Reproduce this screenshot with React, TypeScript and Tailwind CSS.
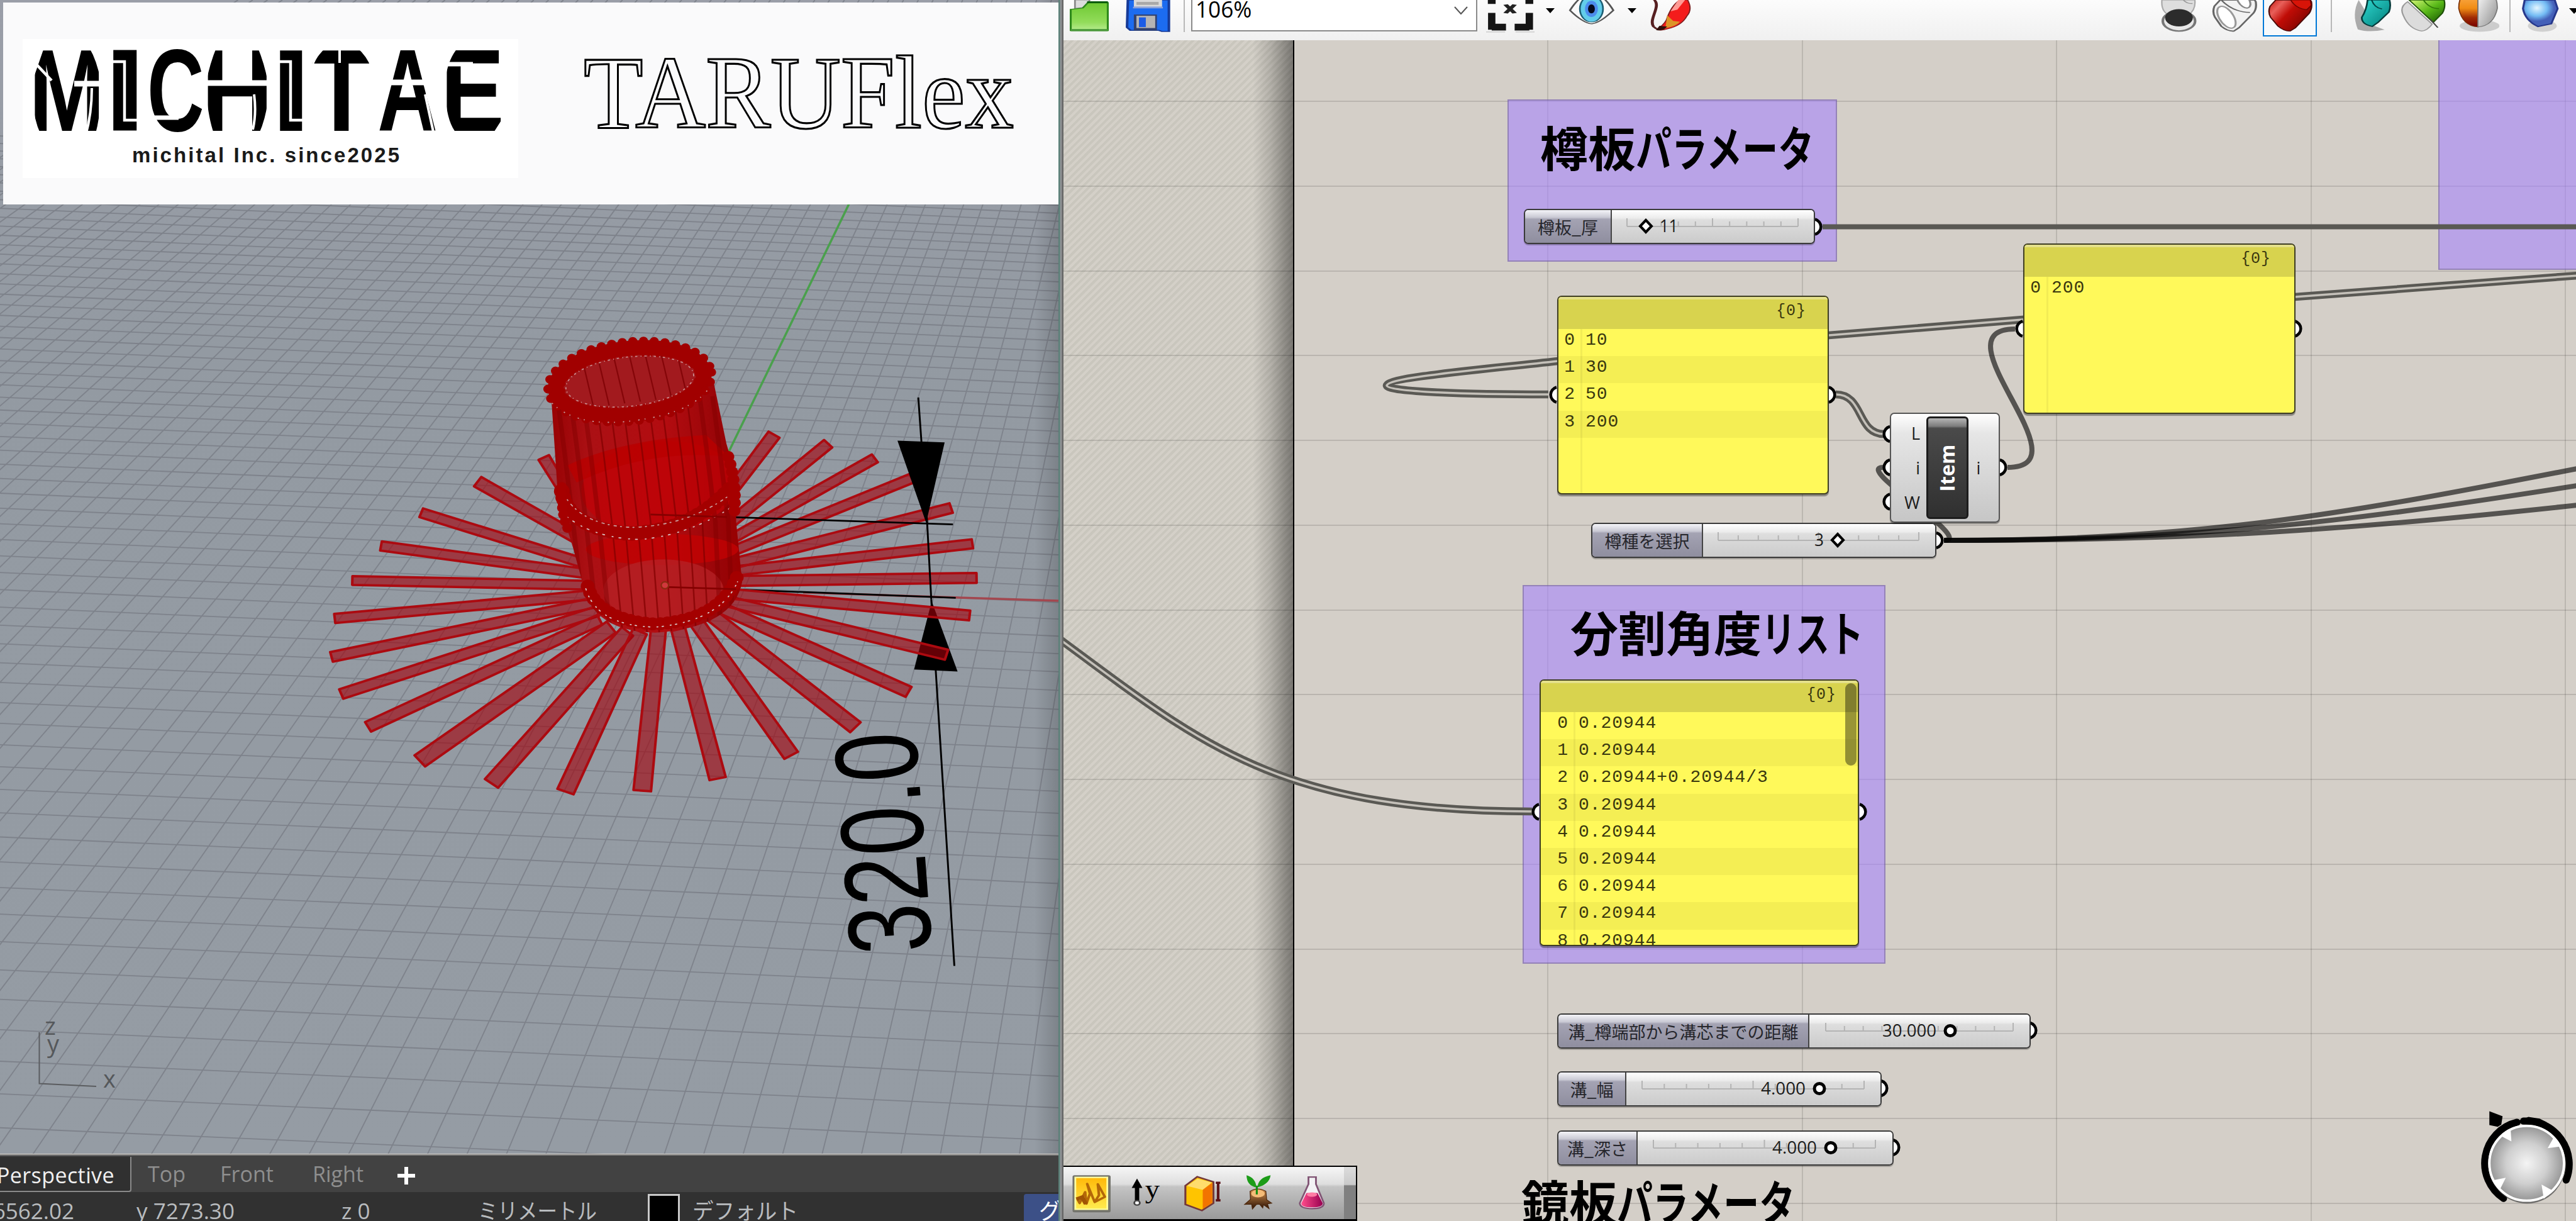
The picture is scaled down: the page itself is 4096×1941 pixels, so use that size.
import React from "react";

const JP = "font-['Noto_Sans_CJK_JP',sans-serif]";
const UI = "font-['Open_Sans','Noto_Sans_CJK_JP',sans-serif]";

/* ---------- Rhino viewport ---------- */

// Outer end, inner end and width of every flattened stave.
const STAVES: number[][] = [
  [549, 332, 605, 430, 26], [406, 388, 640, 530, 30], [284, 460, 650, 582, 25], [197, 537, 655, 603, 25],
  [135, 617, 655, 628, 24], [97, 705, 655, 650, 25], [90, 794, 660, 668, 27], [111, 880, 665, 688, 27],
  [169, 956, 670, 708, 29], [281, 1035, 695, 725, 38], [436, 1087, 730, 735, 37], [596, 1106, 757, 735, 38],
  [762, 1104, 797, 730, 38], [925, 1076, 840, 730, 36], [1084, 1022, 880, 715, 35], [1223, 957, 915, 700, 35],
  [1338, 875, 935, 682, 30], [1420, 789, 945, 665, 28], [1470, 698, 955, 648, 27], [1485, 611, 955, 618, 27],
  [1476, 532, 955, 596, 25], [1430, 449, 950, 580, 27], [1345, 380, 950, 552, 25], [1265, 334, 940, 530, 25],
  [1164, 300, 945, 490, 27], [1047, 279, 940, 430, 29],
];

const stavePoints = ([x1, y1, x2, y2, w]: number[]) => {
  const l = Math.hypot(x2 - x1, y2 - y1);
  const nx = (-(y2 - y1) / l) * (w / 2);
  const ny = ((x2 - x1) / l) * (w / 2);
  const k = 0.85;
  return `${x1 + nx},${y1 + ny * k} ${x1 - nx},${y1 - ny * k} ${x2 - nx * k},${y2 - ny * k} ${x2 + nx * k},${y2 + ny * k}`;
};

const HORIZON = -1100;
const ROWS = Array.from({ length: 70 }, (_, i) => HORIZON + 157500 / (77.586 - (i - 38)));
const COLS = Array.from({ length: 68 }, (_, i) => 1056 + 43.4 * (i - 48));

const BODY = "M565,190 L572,300 L580,430 L612,540 L640,650 Q670,735 790,738 Q960,725 978,620 L965,480 L966,380 L944,300 L915,150 Z";

function Scene() {
  return (
    <svg className="absolute inset-0 block" width="1683" height="1834" viewBox="0 0 1683 1834">
      <defs>
        <linearGradient id="sky" x1="0" y1="0" x2="0" y2="1">
          <stop offset="0" stopColor="#9a9ea8" />
          <stop offset="0.3" stopColor="#939aa2" />
          <stop offset="1" stopColor="#959ca4" />
        </linearGradient>
        <linearGradient id="wood" x1="0" y1="0" x2="1" y2="0">
          <stop offset="0" stopColor="#980204" />
          <stop offset="0.2" stopColor="#ab1014" />
          <stop offset="0.6" stopColor="#b30c10" />
          <stop offset="0.88" stopColor="#980508" />
          <stop offset="1" stopColor="#980000" />
        </linearGradient>
        <linearGradient id="edge" x1="0" y1="0" x2="1" y2="0">
          <stop offset="0" stopColor="#000" stopOpacity="0" />
          <stop offset="1" stopColor="#000" stopOpacity="0.16" />
        </linearGradient>
        <clipPath id="bodyClip">
          <path d={BODY} />
        </clipPath>
      </defs>
      <rect width="1683" height="1834" fill="url(#sky)" />
      <g stroke="#7c8089" strokeWidth="1.8" opacity="0.9">
        {ROWS.map((y, i) => (
          <line key={i} x1="0" y1={y - 1056 * 0.044} x2="1683" y2={y + 626 * 0.044} />
        ))}
        {COLS.map((x, i) => {
          const dx = (2041 - x) / 2030;
          return <line key={i} x1={x + dx * 930} y1="0" x2={x - dx * 920} y2="1850" />;
        })}
      </g>
      <line x1="1056" y1="930" x2="1352" y2="320" stroke="#4aa04c" strokeWidth="3.5" />
      <rect x="1645" width="38" height="1834" fill="url(#edge)" />

      <g transform="translate(461 499.5) scale(.7352 .6861)">
        <path d="M1387,660 L1437,1510" stroke="#000" strokeWidth="4" />
        <path d="M1388,665 L1350,823 L1444,828 Z" />
        <path d="M1110,645 L1664,664" stroke="#a3474f" strokeWidth="5" />
        <path d="M965,638 L1440,657" stroke="#000" strokeWidth="4" />
        {STAVES.map((s, i) => (
          <polygon key={i} points={stavePoints(s)} fill="#a1000a" fillOpacity="0.62" stroke="#ac0a10" strokeWidth="5.5" strokeLinejoin="round" />
        ))}
        <path d="M945,470 L1434,487" stroke="#000" strokeWidth="4" />
        <path d="M1359,193 L1378,480 L1387,660" stroke="#000" strokeWidth="4" fill="none" />
        <path d="M1314,293 L1416,297 L1376,483 Z" />

        <path d={BODY} fill="url(#wood)" />
        <g clipPath="url(#bodyClip)">
          <ellipse cx="800" cy="400" rx="170" ry="105" fill="#c20205" opacity="0.7" transform="rotate(-6 800 400)" />
          <path d="M600,350 Q720,290 900,280 L950,330 Q780,310 620,390 Z" fill="#b90000" opacity="0.8" />
          <ellipse cx="805" cy="545" rx="165" ry="36" fill="#c00203" opacity="0.85" />
          <ellipse cx="808" cy="640" rx="130" ry="72" fill="#b52327" opacity="0.75" />
          {Array.from({ length: 13 }, (_, i) => {
            const x = 578 + i * 28;
            const rim = i < 3 || i > 10;
            return (
              <path key={i} d={`M${x},190 L${x + 16},320 L${x + 34},480 L${x + 62 - i * 1.5},740`} fill="none" stroke="#800000" strokeWidth={rim ? 10 : 3.5} opacity={rim ? 0.45 : 0.7} />
            );
          })}
        </g>

        <g fill="none" strokeLinecap="round">
          <path d="M588,410 Q600,495 730,508 Q870,505 955,400" stroke="#a40000" strokeWidth="34" strokeDasharray="0.1 15" />
          <path d="M588,410 Q600,495 730,508 Q870,505 955,400" stroke="#a40000" strokeWidth="20" opacity="0.8" />
          <path d="M600,430 Q640,490 740,494 Q860,490 950,420" stroke="#c9a0a0" strokeWidth="2.5" strokeDasharray="2 11 5 9" />
          <path d="M600,470 Q660,520 760,522 Q870,510 965,440" stroke="#d8c0c0" strokeWidth="2.5" strokeDasharray="2 13 4 17" />
          <path d="M644,630 Q664,708 790,718 Q935,708 968,605" stroke="#a40000" strokeWidth="30" strokeDasharray="0.1 16" />
          <path d="M644,630 Q664,708 790,718 Q935,708 968,605" stroke="#a40000" strokeWidth="18" />
          <path d="M640,636 Q664,722 790,725 Q930,712 968,620" stroke="#d8caca" strokeWidth="2.5" strokeDasharray="3 15 2 9" />
          <path d="M948,330 Q968,400 960,470" stroke="#a60000" strokeWidth="26" strokeDasharray="0.1 18" />
          <path d="M588,400 Q584,460 602,500" stroke="#a60000" strokeWidth="22" strokeDasharray="0.1 16" />
        </g>

        <g transform="rotate(-7 735 156)">
          <ellipse cx="735" cy="156" rx="152" ry="72" fill="#a21a1e" />
          {[0, 1, 2, 3, 4, 5, 6].map((i) => (
            <path key={i} d={`M${640 + i * 34},100 L${650 + i * 34},205`} stroke="#840508" strokeWidth="3" />
          ))}
          <g fill="none" stroke="#a10000" strokeLinecap="round">
            <ellipse cx="735" cy="156" rx="161" ry="77" strokeWidth="34" />
            <ellipse cx="735" cy="156" rx="178" ry="92" strokeWidth="20" strokeDasharray="0.1 23" />
            <ellipse cx="735" cy="156" rx="147" ry="62" strokeWidth="12" strokeDasharray="0.1 16" />
          </g>
          <ellipse cx="735" cy="156" rx="139" ry="57" fill="none" stroke="#c98b8d" strokeWidth="2.5" strokeDasharray="5 7 2 6" />
          <path d="M562,185 Q610,250 735,247 Q860,245 905,190" fill="none" stroke="#c9a0a2" strokeWidth="2.5" strokeDasharray="3 11 2 17" />
        </g>

        <path d="M780,464 L945,470 M811,632 L965,637" stroke="#850000" strokeWidth="4" />
        <circle cx="811" cy="628" r="8" fill="#d0383c" stroke="#8b2a10" strokeWidth="3" />
      </g>

      <text
        transform="translate(1482 1511) rotate(-94.3)"
        fontSize="188"
        textLength="352"
        lengthAdjust="spacingAndGlyphs"
        className="font-['Liberation_Sans',sans-serif]"
      >
        320.0
      </text>

      <path d="M62.500,1641 V1722.500 L153,1727" fill="none" stroke="#5b5d60" strokeWidth="2" />
      <g fontSize="38" fill="#55585b" className="font-['Open_Sans',sans-serif]">
        <text x="71" y="1645">z</text>
        <text x="75" y="1673">y</text>
        <text x="164" y="1729">x</text>
      </g>
    </svg>
  );
}

// letter, left edge, ink width, side bearing and ink width in em/100
const MARK: [string, number, number, number, number][] = [
  ["M", 56, 101, 7, 69.5], ["I", 181, 36, 7, 14], ["C", 240, 79, 4.7, 63], ["H", 331, 92, 7, 58],
  ["I", 446, 34, 7, 14], ["T", 498, 90, 2, 57], ["A", 601, 94, 0.5, 71], ["E", 711, 84, 7, 55],
];

function Banner() {
  return (
    <div className="absolute left-[5px] top-[4px] flex h-[321px] w-[1680px] bg-[#fafafb]">
      <div className="ml-[31px] mt-[58px] h-[221px] w-[788px] bg-white">
        <svg className="block overflow-visible" width="788" height="221" viewBox="36 62 788 221">
          <g fontSize="100" fontWeight="700" className="font-['Liberation_Sans',sans-serif]">
            {MARK.map(([c, x, w, bearing, ink], i) => (
              <text key={i} transform={`translate(${x - (bearing * w) / ink} 207.500) scale(${w / ink} 1.860)`}>
                {c}
              </text>
            ))}
          </g>
          <g fill="none" stroke="#fff">
            <path d="M118,133 H160 M328,132 H428 M598,131 H700" strokeWidth="9" />
            <path d="M50,94 L82,128 M178,98 H198 V191 H220 M443,98 H462 V191 H482" strokeWidth="4.500" />
            <path d="M234,187 H284 M706,102 H752" strokeWidth="7" />
            <path d="M540,76 V100 M136,216 Q146,180 146,140 M404,150 Q408,180 402,206 M676,150 L690,214" strokeWidth="4" />
          </g>
          <g fill="#fff">
            <path d="M52,76 H70 L52,128 Z M161,76 H142 Q154,96 160,128 Z M52,212 H64 Q54,190 52,160 Z M161,212 H152 Q158,190 160,160 Z" />
            <path d="M326,76 H344 Q334,100 328,130 Z M428,76 H410 Q420,100 426,130 Z M326,212 H340 Q332,190 328,150 Z M428,212 H412 Q422,190 426,160 Z" />
            <path d="M494,76 H518 Q502,90 497,108 Z M592,76 H568 Q584,90 590,108 Z" />
            <path d="M707,76 H728 Q714,92 709,120 Z M707,212 H726 Q712,196 709,160 Z M798,212 H784 L798,190 Z" />
          </g>
          <text x="210" y="258" fontSize="33" fontWeight="700" fill="#1a1a1a" textLength="425" className="font-['Liberation_Sans',sans-serif]">
            michital Inc. since2025
          </text>
        </svg>
      </div>
      <svg className="ml-[90px] mt-[66px] block overflow-visible" width="720" height="170" viewBox="914 70 720 170">
        <text x="928" y="203" fontSize="166" fill="#fbfbfc" stroke="#000" strokeWidth="3.200" textLength="684" lengthAdjust="spacingAndGlyphs" className="font-['Liberation_Serif',serif]">
          TARUFlex
        </text>
      </svg>
    </div>
  );
}

function RhinoPane() {
  return (
    <div className="flex w-[1683px] shrink-0 flex-col overflow-hidden">
      <div className="relative h-[1835px] shrink-0 overflow-hidden">
        <Scene />
        <Banner />
      </div>
      <div className={`flex h-[60px] shrink-0 items-stretch whitespace-nowrap border-t-2 border-[#808080] bg-[#424242] text-[34px] leading-[58px] text-[#8e8e8e] ${UI}`}>
        <div className="mt-0.5 flex w-[209px] shrink-0 justify-end rounded-br border-b-2 border-r-2 border-[#8a8a8a] bg-[#303030] pr-[25px] tracking-[0.4px] text-[#f0f0f0]">
          Perspective
        </div>
        <div className="ml-[26px] w-[115px]">Top</div>
        <div className="w-[147px]">Front</div>
        <div className="w-[134px]">Right</div>
        <svg className="mt-[17px]" width="30" height="30" viewBox="0 0 30 30">
          <path d="M15,1 V29 M1,15 H29" stroke="#fff" strokeWidth="6" />
        </svg>
      </div>
      <div className={`flex h-[46px] shrink-0 overflow-hidden whitespace-nowrap bg-[#313131] text-[35px] leading-[60px] text-[#b9bcbf] ${UI}`}>
        <div className="flex w-[118px] shrink-0 justify-end">6562.02</div>
        <div className="ml-[99px] w-[326px] shrink-0">y 7273.30</div>
        <div className="w-[217px] shrink-0">z 0</div>
        <div className="w-[270px] shrink-0 origin-left scale-x-[.9]">ミリメートル</div>
        <div className="mt-[3px] h-[60px] w-[51px] shrink-0 border-[3px] border-[#c9c9c9] bg-black" />
        <div className="ml-[20px] w-[527px] shrink-0">
          <span className="inline-block origin-left scale-x-[.96]">デフォルト</span>
        </div>
        <div className="mt-[3px] w-[60px] shrink-0 overflow-hidden rounded-tl bg-[#3c5087] pl-[24px] leading-[54px] text-white">グ</div>
      </div>
    </div>
  );
}

/* ---------- Grasshopper toolbar ---------- */

function Icon({ x, w, className, children }: { x: number; w: number; className: string; children: React.ReactNode }) {
  return (
    <svg className={`block h-[62px] shrink-0 ${className}`} viewBox={`${x} 0 ${w} 242`} preserveAspectRatio="none">
      {children}
    </svg>
  );
}

// Icons on the right half share a coordinate space that is slightly wider per pixel.
function ShapeIcon({ x, w, className, children }: { x: number; w: number; className: string; children: React.ReactNode }) {
  return (
    <svg className={`block h-[62px] shrink-0 ${className}`} viewBox={`${x} 0 ${w} 226`} preserveAspectRatio="none">
      {children}
    </svg>
  );
}

function Toolbar() {
  return (
    <div className="flex h-[64px] shrink-0 items-start bg-linear-to-b from-[#fcfcfc] to-[#f0f0f0]">
      <svg width="0" height="0" className="absolute">
        <defs>
          <linearGradient id="folder" x1="0" y1="0" x2="0" y2="1"><stop offset="0" stopColor="#6ec832" /><stop offset=".7" stopColor="#92dc5a" /><stop offset="1" stopColor="#b8ec90" /></linearGradient>
          <linearGradient id="red" x1="0" y1="0" x2="1" y2=".7"><stop offset="0" stopColor="#c81810" /><stop offset=".25" stopColor="#e8605a" /><stop offset=".5" stopColor="#c00c06" /><stop offset="1" stopColor="#760400" /></linearGradient>
          <linearGradient id="teal" x1="0" y1="0" x2="1" y2="1"><stop offset="0" stopColor="#30d8d0" /><stop offset="1" stopColor="#007c78" /></linearGradient>
          <linearGradient id="green" x1="0" y1="0" x2="1" y2="1"><stop offset="0" stopColor="#d8f878" /><stop offset=".5" stopColor="#58b818" /><stop offset="1" stopColor="#145000" /></linearGradient>
          <linearGradient id="orange" x1="0" y1="0" x2="0" y2="1"><stop offset="0" stopColor="#ffb860" /><stop offset=".5" stopColor="#f08c14" /><stop offset=".75" stopColor="#a02c04" /><stop offset="1" stopColor="#700" /></linearGradient>
          <linearGradient id="silver" x1="0" y1="0" x2="1" y2="1"><stop offset="0" stopColor="#fff" /><stop offset="1" stopColor="#8c8c8c" /></linearGradient>
          <radialGradient id="blue" cx=".4" cy=".3"><stop offset="0" stopColor="#e4f6ff" /><stop offset=".6" stopColor="#74bcf4" /><stop offset="1" stopColor="#4460b8" /></radialGradient>
        </defs>
      </svg>
      <Icon x={26} w={90} className="ml-[10px] w-[62px]">
        <path d="M38,0 H72 L64,45 L38,52 Z" fill="#dcdcdc" stroke="#888" strokeWidth="4" />
        <path d="M28,58 L56,50 L68,16 H114 V190 H28 Z" fill="url(#folder)" stroke="#2f8a1c" strokeWidth="5" />
        <rect x="66" y="8" width="48" height="12" fill="#0a5c0c" />
        <rect x="28" y="180" width="86" height="14" fill="#4c9a3c" />
      </Icon>
      <Icon x={155} w={106} className="ml-[27px] w-[72px]">
        <path d="M160,0 H256 V195 H240 L232,188 H166 L158,170 Z" fill="#1c6cf0" stroke="#173a96" strokeWidth="6" />
        <rect x="174" width="66" height="42" fill="#d9d9d9" />
        <rect x="180" y="12" width="52" height="18" fill="#a8a8a8" />
        <rect x="172" y="42" width="70" height="10" fill="#8fa3d8" />
        <rect x="174" y="90" width="54" height="100" fill="#32426e" />
        <rect x="180" y="98" width="44" height="76" fill="#b4b4b4" />
        <rect x="186" y="108" width="16" height="60" fill="#1b5ce6" />
      </Icon>
      <div className="ml-[20px] h-[51px] w-[2px] shrink-0 bg-[#b8b8b8]" />
      <div className={`ml-[10px] flex h-[50px] w-[455px] shrink-0 items-start justify-between border-x-2 border-b-2 border-[#8a8a8a] bg-white pl-[5px] pr-[12px] text-[37px] leading-[28px] text-black ${UI}`}>
        <span className="origin-left scale-x-[.95]">106%</span>
        <svg className="mt-[9px]" width="24" height="15" viewBox="0 0 24 15"><path d="M2,2 L12,13 L22,2" fill="none" stroke="#555" strokeWidth="2" /></svg>
      </div>
      <Icon x={990} w={112} className="ml-[14px] w-[77px]">
        <path d="M1003,0 V24 M1090,0 V24" stroke="#151515" strokeWidth="18" />
        <path d="M1003,80 V176 H1034 M1090,80 V176 H1058" fill="none" stroke="#151515" strokeWidth="17" />
        <path d="M1003,168 H1036 M1090,168 H1056" stroke="#151515" strokeWidth="42" />
        <path d="M1035,28 L1056,82 M1056,28 L1035,82" stroke="#222" strokeWidth="11" />
        <path d="M990,198 H1034 M1058,198 H1102" stroke="#ccc" strokeWidth="6" />
      </Icon>
      <div className="ml-[18px] mt-[13px] border-x-[7px] border-t-[8px] border-x-transparent border-t-black" />
      <Icon x={1180} w={110} className="ml-[21px] w-[75px]">
        <path d="M1185,64 Q1210,-40 1236,-40 Q1262,-40 1286,64 Q1255,142 1236,148 Q1215,142 1185,64 Z" fill="#fafafa" stroke="#555" strokeWidth="5" />
        <ellipse cx="1235" cy="55" rx="27" ry="82" fill="#62cdea" stroke="#1d5f74" strokeWidth="4" />
        <ellipse cx="1235" cy="55" rx="15" ry="50" fill="#4c8cec" />
        <ellipse cx="1235" cy="55" rx="8" ry="28" fill="#050a1c" />
      </Icon>
      <div className="ml-[20px] mt-[13px] border-x-[7px] border-t-[8px] border-x-transparent border-t-black" />
      <Icon x={1366} w={106} className="ml-[19px] w-[72px]">
        <path d="M1380,0 C1396,40 1366,120 1378,165 Q1390,195 1404,180" fill="none" stroke="#572022" strokeWidth="7" />
        <path d="M1408,125 Q1420,30 1440,0 H1458 Q1470,60 1456,100 Q1444,160 1410,180 Q1390,195 1386,180 Q1400,160 1408,125 Z" fill="#f41c1c" stroke="#7c2020" strokeWidth="3" />
        <path d="M1436,0 L1418,70 L1434,60 L1452,0 Z" fill="#ff9a94" />
        <path d="M1410,95 L1424,130 L1440,135 Q1430,165 1406,175 Z" fill="#dc9428" />
        <path d="M1392,160 L1410,165 Q1400,195 1384,186 Z" fill="#30100c" />
      </Icon>
      <ShapeIcon x={112} w={135} className="ml-[740px] w-[62px]">
        <path d="M122,0 Q118,70 150,90 L212,88 Q240,60 236,0 Z" fill="#dedede" stroke="#aaa" strokeWidth="5" />
        <path d="M196,0 Q210,24 228,20" fill="none" stroke="#999" strokeWidth="5" />
        <ellipse cx="181" cy="122" rx="56" ry="58" fill="#e8e8e8" stroke="#777" strokeWidth="9" />
        <ellipse cx="181" cy="103" rx="48" ry="50" fill="#2c2c2c" />
      </ShapeIcon>
      <ShapeIcon x={295} w={162} className="ml-[21px] w-[74px]">
        <path d="M326,0 L306,36 Q298,70 308,100 L330,152 Q352,182 374,180 L392,160 L442,76 Q454,50 450,10 L446,0 Z" fill="#f2f2f2" stroke="#666" strokeWidth="7" />
        <ellipse cx="348" cy="100" rx="26" ry="66" fill="#fff" stroke="#999" strokeWidth="7" transform="rotate(-18 348 100)" />
        <path d="M330,0 Q370,70 430,72" fill="none" stroke="#666" strokeWidth="6" />
        <ellipse cx="408" cy="4" rx="20" ry="44" fill="#fff" stroke="#888" strokeWidth="7" transform="rotate(-18 408 4)" />
      </ShapeIcon>
      <div className="ml-[8px] flex h-[58px] w-[86px] shrink-0 justify-center overflow-hidden border-x-2 border-b-2 border-[#0078d7] bg-[#f7f9fb]">
        <ShapeIcon x={490} w={162} className="w-[74px]">
          <path d="M522,0 L502,36 Q494,70 504,100 L530,152 Q552,182 572,180 L590,162 L638,78 Q650,50 646,10 L642,0 Z" fill="url(#red)" stroke="#4c0a08" strokeWidth="5" />
          <path d="M574,0 Q592,50 630,56 L646,30 L642,0 Z" fill="#d81408" stroke="#6a0400" strokeWidth="4" />
        </ShapeIcon>
      </div>
      <div className="ml-[22px] h-[51px] w-[2px] shrink-0 bg-[#b8b8b8]" />
      <ShapeIcon x={790} w={142} className="ml-[31px] w-[65px]">
        <path d="M815,0 Q790,80 812,170 Q850,190 905,172 L870,150 Z" fill="#000" opacity=".3" />
        <path d="M846,0 Q842,60 826,100 Q824,140 862,153 L882,130 L920,70 Q928,36 922,0 Z" fill="url(#teal)" stroke="#063c3c" strokeWidth="6" />
        <path d="M860,0 Q870,46 896,52" fill="none" stroke="#044" strokeWidth="5" />
      </ShapeIcon>
      <ShapeIcon x={958} w={162} className="ml-[12px] w-[74px]">
        <path d="M985,10 Q955,40 970,90 Q990,170 1034,180 Q1054,176 1070,140 Z" fill="#dcdcdc" stroke="#999" strokeWidth="5" />
        <path d="M990,0 L1074,130 L1106,76 Q1118,40 1112,0 Z" fill="url(#green)" stroke="#1e5008" strokeWidth="5" />
        <path d="M1040,0 Q1060,50 1094,50" fill="none" stroke="#2f7808" strokeWidth="5" />
        <path d="M1062,110 L1090,160" stroke="#444" strokeWidth="5" />
      </ShapeIcon>
      <ShapeIcon x={1154} w={150} className="ml-[16px] w-[68px]">
        <ellipse cx="1235" cy="150" rx="70" ry="34" fill="#000" opacity=".16" />
        <path d="M1229,-60 Q1160,-60 1162,50 Q1175,150 1229,156 Z" fill="url(#orange)" stroke="#7a3008" strokeWidth="4" />
        <path d="M1229,-60 Q1300,-60 1297,50 Q1284,150 1229,156 Z" fill="url(#silver)" stroke="#777" strokeWidth="4" />
      </ShapeIcon>
      <div className="ml-[16px] h-[51px] w-[2px] shrink-0 bg-[#b8b8b8]" />
      <ShapeIcon x={1380} w={135} className="ml-[16px] w-[62px]">
        <ellipse cx="1455" cy="150" rx="50" ry="34" fill="#000" opacity=".14" />
        <path d="M1394,0 L1388,50 Q1396,120 1440,154 L1486,138 L1508,50 L1498,0 Z" fill="url(#blue)" stroke="#26388c" strokeWidth="7" />
      </ShapeIcon>
      <div className="ml-[15px] mt-[13px] shrink-0 border-x-[8px] border-t-[9px] border-x-transparent border-t-black" />
    </div>
  );
}

/* ---------- Grasshopper canvas ---------- */

function Grip({ x, y, side }: { x: number; y: number; side: "l" | "r" }) {
  return side === "r" ? (
    <path d={`M${x},${y - 12} A13,12.500 0 0 1 ${x},${y + 12}`} fill="#fff" stroke="#000" strokeWidth="4.500" />
  ) : (
    <path d={`M${x},${y - 12} A13,12.500 0 0 0 ${x},${y + 12}`} fill="#fff" stroke="#000" strokeWidth="4.500" />
  );
}

const W = "#5a5954";

function DoubleWire({ d }: { d: string }) {
  return (
    <g fill="none">
      <path d={d} stroke={W} strokeWidth="12.500" />
      <path d={d} stroke="#c4c0b9" strokeWidth="3.500" />
    </g>
  );
}

function Wires() {
  return (
    <svg className="absolute inset-0 block overflow-visible" width="2406" height="1877" viewBox="1690 64 2406 1877">
      <path d="M2896,360.500 H4096" stroke={W} strokeWidth="8" />
      <DoubleWire d="M2460,627 C2330,627 2205,623 2203,613 C2205,600 2340,589 2475,574 C2620,559 2800,541 2906,533 L3214,508 L3647,472 L4096,438" />
      <DoubleWire d="M2917,627 C2962,627 2950,690 2994,690" />
      <DoubleWire d="M1680,1014 C1900,1175 2020,1290 2434,1290" />
      <g fill="none" stroke="#000" strokeOpacity="0.6" strokeWidth="8">
        <path d="M3190,743 C3320,743 3072,523 3202,523" />
        <path d="M3089,859 C3140,859 2945,743 2992,743" />
        <path d="M3089,859 C3500,859 3725,817 4096,745" />
        <path d="M3089,859 C3500,859 3725,830 4096,772" />
        <path d="M3089,859 C3500,859 3725,843 4096,803" />
      </g>
      <Grip x={2884} y={360.5} side="r" />
      <Grip x={3077} y={859} side="r" />
      <Grip x={3226} y={1638} side="r" />
      <Grip x={2989} y={1730} side="r" />
      <Grip x={3008} y={1824} side="r" />
      <Grip x={2473} y={627.5} side="l" />
      <Grip x={2906} y={627.5} side="r" />
      <Grip x={3214} y={522.5} side="l" />
      <Grip x={3647} y={522.5} side="r" />
      <Grip x={2445} y={1290.5} side="l" />
      <Grip x={2955} y={1290.5} side="r" />
      <Grip x={3003} y={690} side="l" />
      <Grip x={3003} y={743} side="l" />
      <Grip x={3003} y={797.5} side="l" />
      <Grip x={3178} y={743} side="r" />
    </svg>
  );
}

function Group({ className }: { className: string }) {
  return <div className={`absolute border-2 border-black/20 bg-[rgba(167,134,252,0.6)] bg-clip-border ${className}`} />;
}

function Title({ className, kanji, kana, kanaClass }: { className: string; kanji: string; kana: string; kanaClass: string }) {
  return (
    <div className={`absolute flex whitespace-nowrap text-[76px] font-bold leading-[76px] text-black ${JP} ${className}`}>
      <span>{kanji}</span>
      <span className={`inline-block origin-left ${kanaClass}`}>{kana}</span>
    </div>
  );
}

type SliderProps = {
  className: string;
  labelClass: string;
  label: string;
  face: number;
  track: [number, number];
  value: string;
  valueX: number;
  valueW: number;
  knob: number;
  round?: boolean;
};

function Slider({ className, labelClass, label, face, track, value, valueX, valueW, knob, round }: SliderProps) {
  const step = (track[1] - track[0]) / 10;
  return (
    <div className={`absolute flex h-[56px] overflow-hidden rounded-[7px] border-[2.5px] border-[#3a3a3a] shadow-[0_2px_1px_rgba(0,0,0,0.25)] ${className}`}>
      <div className={`flex shrink-0 items-center justify-center whitespace-nowrap border-r-2 border-[#444] bg-[linear-gradient(180deg,#f4f4f8_0%,#c9c9d4_22%,#a4a3b3_28%,#8f8e9f_100%)] text-[27px] leading-none text-[#26262c] ${JP} ${labelClass}`}>
        {label}
      </div>
      <div className="relative grow bg-[linear-gradient(180deg,#ffffff_0%,#ececec_24%,#dedede_30%,#cbcbcb_100%)]">
        <svg className="absolute left-0 top-0 block" width={face} height="51" viewBox={`0 0 ${face} 51`}>
          <g stroke="#b4b4b4" strokeWidth="2" fill="none">
            <path d={`M${track[0]},26 H${track[1]}`} />
            {Array.from({ length: 11 }, (_, i) => (
              <path key={i} d={`M${track[0] + step * i},26 V${i % 5 === 0 ? 13 : 18}`} />
            ))}
          </g>
          <text x={valueX} y="35" fontSize="27" fill="#1c1c1c" textLength={valueW} lengthAdjust="spacingAndGlyphs" className="font-['Open_Sans',sans-serif]">
            {value}
          </text>
          {round ? (
            <circle cx={knob} cy="25.500" r="8" fill="#fff" stroke="#000" strokeWidth="5" />
          ) : (
            <path d={`M${knob},16 l9,9.500 l-9,9.500 l-9,-9.500 Z`} fill="#fff" stroke="#000" strokeWidth="4" />
          )}
        </svg>
      </div>
    </div>
  );
}

type PanelProps = { className: string; gutter: string; rows: string[]; braceClass: string; headerClass: string; scroll?: boolean };

function Panel({ className, gutter, rows, braceClass, headerClass, scroll }: PanelProps) {
  return (
    <div className={`absolute flex flex-col overflow-hidden rounded-[7px] border-2 border-[#3f3e22] bg-[#fff95a] font-['Liberation_Mono',monospace] text-[28px] tracking-[0.95px] text-[#3a380f] shadow-[0_3px_1px_rgba(0,0,0,0.35)] ${className}`}>
      <div className={`flex shrink-0 justify-end border-t-[4px] border-[#e4e08a] bg-[#d8d34e] pt-[3px] text-[25px] leading-[32px] ${headerClass}`}>
        <span className={braceClass}>{"{0}"}</span>
      </div>
      {rows.map((r, i) => (
        <div key={i} className={`flex h-[43.200px] shrink-0 leading-[36px] ${i % 2 ? "bg-[#f4ee54]" : "bg-[#fff95a]"}`}>
          <div className={`flex shrink-0 justify-end border-r-[3px] border-black/5 pr-[8px] ${gutter}`}>{i}</div>
          <div className="pl-[5px]">{r}</div>
        </div>
      ))}
      <div className="flex grow">
        <div className={`shrink-0 border-r-[3px] border-black/5 ${gutter}`} />
      </div>
      {scroll && <div className="absolute right-[2px] top-[4px] h-[131px] w-[18px] rounded-full bg-black/40" />}
    </div>
  );
}

function ItemComponent() {
  return (
    <div className="absolute left-[1313px] top-[592px] flex h-[175px] w-[175px] rounded-[7px] border-[2.5px] border-[#555] bg-[linear-gradient(180deg,#ffffff_0%,#e6e6e6_18%,#c6c6c6_100%)] font-['Open_Sans',sans-serif] text-[27px] leading-none text-[#1c1c1c] shadow-[0_2px_1px_rgba(0,0,0,0.35)]">
      <div className="flex w-[56px] shrink-0 flex-col items-end justify-between py-[17px] pr-[10px]">
        <span>L</span>
        <span>i</span>
        <span>W</span>
      </div>
      <div className="mt-[4px] flex h-[163px] w-[67px] shrink-0 items-center justify-center rounded-[6px] border-[3px] border-[#1c1c1c] bg-[linear-gradient(180deg,#b4b4b4_0%,#7c7c7c_8%,#4a4a4a_10%,#303030_100%)]">
        <span className="-rotate-90 text-[32px] font-bold text-white">Item</span>
      </div>
      <div className="flex w-[32px] items-center justify-center">i</div>
    </div>
  );
}

function Compass() {
  return (
    <svg className="absolute left-[2246px] top-[1700px] block" width="160" height="176" viewBox="195 137 625 687">
      <defs>
        <radialGradient id="ball"><stop offset="0" stopColor="#f4f4f4" /><stop offset=".55" stopColor="#cfcfcf" /><stop offset="1" stopColor="#969696" /></radialGradient>
      </defs>
      <path d="M278,147 L360,178 L352,230 L330,243 L278,232 Z" />
      <path d="M366,688 A262,262 0 0 1 450,215 M490,208 A268,268 0 0 1 755,574" fill="none" stroke="#000" strokeWidth="44" strokeLinecap="round" />
      <path d="M480,200 L520,182 L590,192 L635,215 L600,235 Z" />
      <ellipse cx="512" cy="478" rx="238" ry="242" fill="#444" opacity=".7" />
      <circle cx="510" cy="470" r="232" fill="url(#ball)" stroke="#fff" strokeWidth="15" />
      <g fill="#fff">
        <path d="M345,298 L410,258 L415,334 Z" />
        <path d="M680,305 L716,366 L640,376 Z" />
        <path d="M300,575 L380,560 L345,630 Z" />
        <path d="M602,602 L672,640 L616,690 Z" />
      </g>
    </svg>
  );
}

function Palette() {
  return (
    <div className="absolute bottom-0 left-0 flex h-[88px] w-[467px] border-2 border-b-[3px] border-l-0 border-black bg-[linear-gradient(180deg,#f6f6f6_0%,#dedede_33%,#c4c4c4_38%,#9a9a9a_100%)]">
      <svg className="block h-[83px] w-[446px] shrink-0" viewBox="26 72 1422 328" preserveAspectRatio="none">
        <defs>
          <linearGradient id="note" x1="0" y1="0" x2="0" y2="1"><stop offset="0" stopColor="#ffb808" /><stop offset="1" stopColor="#ffec50" /></linearGradient>
          <linearGradient id="pink" x1="0" y1="0" x2="1" y2="0"><stop offset="0" stopColor="#ff4c8c" /><stop offset="1" stopColor="#980050" /></linearGradient>
          <linearGradient id="stump" x1="0" y1="0" x2="0" y2="1"><stop offset="0" stopColor="#d89450" /><stop offset="1" stopColor="#2c1204" /></linearGradient>
        </defs>
        <rect x="72" y="124" width="193" height="234" rx="10" fill="#74746c" />
        <rect x="86" y="138" width="162" height="200" fill="url(#note)" stroke="#fffca0" strokeWidth="9" />
        <path d="M96,272 L108,300 L136,230 L142,304 L160,240 L146,178 L184,292 L206,250 L200,180 L236,260 L180,296" fill="none" stroke="#b46808" strokeWidth="13" strokeLinejoin="round" />
        <path d="M92,275 L120,262 L140,305" fill="none" stroke="#a05404" strokeWidth="22" />
        <path d="M399,170 V285" stroke="#000" strokeWidth="22" />
        <path d="M372,204 L399,145 L426,204 Z" />
        <circle cx="399" cy="298" r="14" fill="#fff" stroke="#444" strokeWidth="9" />
        <text x="440" y="265" fontSize="160" textLength="74" lengthAdjust="spacingAndGlyphs" className="font-['Liberation_Serif',serif]">y</text>
        <path d="M644,190 L704,134 L786,166 V300 L728,346 L644,308 Z" fill="#ffc400" stroke="#74383a" strokeWidth="10" />
        <path d="M652,192 L706,146 L778,170 L732,216 Z" fill="#ffdc6c" />
        <path d="M732,216 L780,172 V298 L732,336 Z" fill="#f27400" />
        <path d="M810,172 V282" stroke="#5c1418" strokeWidth="13" />
        <path d="M798,172 H822 M798,282 H822" stroke="#5c1418" strokeWidth="14" />
        <path d="M972,225 Q1010,195 1052,225 L1056,278 L1082,300 L1060,304 L1068,334 L1040,310 L1036,330 L1020,306 L1004,308 L984,336 L980,306 L944,308 L974,276 Z" fill="url(#stump)" stroke="#4a2408" strokeWidth="4" />
        <ellipse cx="1012" cy="240" rx="34" ry="24" fill="#f4bc78" />
        <path d="M1006,245 V190" stroke="#148c10" strokeWidth="10" />
        <path d="M1004,200 Q955,190 954,124 Q1000,140 1004,200 Z M1010,200 Q1012,140 1076,124 Q1070,180 1010,200 Z" fill="#1c9c18" />
        <path d="M1268,136 H1306 V180 L1346,300 Q1346,334 1286,334 Q1226,334 1224,300 L1268,180 Z" fill="#f2f2f4" stroke="#805474" strokeWidth="9" />
        <path d="M1258,236 H1314 L1340,300 Q1340,326 1286,326 Q1230,326 1232,300 Z" fill="url(#pink)" />
        <ellipse cx="1286" cy="246" rx="26" ry="14" fill="#ff7ca4" />
      </svg>
      <div className="grow bg-[linear-gradient(180deg,#dcdcdc_0%,#cacaca_34%,#808080_36%,#808080_100%)]" />
    </div>
  );
}

const V_LINES = [769, 1173.5, 1578, 1982.5, 2387];
const H_LINES = Array.from({ length: 14 }, (_, i) => 96 + 134.75 * i);

function Canvas() {
  return (
    <div className="relative grow overflow-hidden bg-[#d4cfc8]">
      <div className="absolute left-0 top-0 h-full w-[367px] border-r-2 border-black bg-[repeating-linear-gradient(135deg,#c9c6bd_0px,#c9c6bd_3.500px,#d4d0c8_4.500px,#d4d0c8_8px)]">
        <div className="ml-auto h-full w-[64px] bg-[linear-gradient(90deg,rgba(0,0,0,0),rgba(0,0,0,0.15)_45%,rgba(0,0,0,0.42))]" />
      </div>
      {V_LINES.map((x) => (
        <div key={x} className="absolute top-0 h-full w-[2px] bg-[#bbb7b0]" style={{ left: x }} />
      ))}
      {H_LINES.map((y) => (
        <div key={y} className="absolute left-0 h-[2px] w-full bg-black/12" style={{ top: y }} />
      ))}
      {/* The document's objects, on their own origin one pixel in from the grid. */}
      <div className="absolute left-px top-0 h-full w-full">
        <Group className="left-[705px] top-[94px] h-[258px] w-[524px]" />
        <Group className="left-[729px] top-[866px] h-[602px] w-[577px]" />
        <Group className="left-[2185px] top-[-20px] h-[385px] w-[240px]" />
        <Wires />
        <Title className="left-[757px] top-[130px]" kanji="樽板" kana="パラメータ" kanaClass="scale-x-[.75]" />
        <Title className="left-[805px] top-[901px]" kanji="分割角度" kana="リスト" kanaClass="scale-x-[.71]" />
        <Title className="left-[727px] top-[1806px]" kanji="鏡板" kana="パラメータ" kanaClass="scale-x-[.75]" />
        <Slider className="left-[731px] top-[268px] w-[463px]" labelClass="w-[138px]" label="樽板_厚" face={320} track={[24, 296]} value="11" valueX={76} valueW={29} knob={54} />
        <Slider className="left-[838px] top-[767px] w-[549px]" labelClass="w-[176px]" label="樽種を選択" face={368} track={[24, 343]} value="3" valueX={177} valueW={15} knob={214} />
        <Slider className="left-[784px] top-[1547px] w-[753px]" labelClass="w-[399px]" label="溝_樽端部から溝芯までの距離" face={350} track={[26, 324]} value="30.000" valueX={116} valueW={86} knob={224} round />
        <Slider className="left-[784px] top-[1639px] w-[516px]" labelClass="w-[108px]" label="溝_幅" face={404} track={[25, 378]} value="4.000" valueX={214} valueW={71} knob={307} round />
        <Slider className="left-[784px] top-[1733px] w-[535px]" labelClass="w-[126px]" label="溝_深さ" face={405} track={[25, 378]} value="4.000" valueX={214} valueW={71} knob={307} round />
        <Panel className="left-[784px] top-[406px] h-[316px] w-[432px]" gutter="w-[38px]" rows={["10", "30", "50", "200"]} headerClass="h-[51px]" braceClass="mr-[34px]" />
        <Panel className="left-[1525px] top-[323px] h-[271px] w-[433px]" gutter="w-[38px]" rows={["200"]} headerClass="h-[51px]" braceClass="mr-[37px]" />
        <Panel
          className="left-[756px] top-[1016px] h-[424px] w-[508px]"
          gutter="w-[55px]"
          rows={["0.20944", "0.20944", "0.20944+0.20944/3", "0.20944", "0.20944", "0.20944", "0.20944", "0.20944", "0.20944"]}
          headerClass="h-[50px]"
          braceClass="mr-[34px]"
          scroll
        />
        <ItemComponent />
      </div>
      <Compass />
      <Palette />
    </div>
  );
}

export default function App() {
  return (
    <div className="flex h-[1941px] w-[4096px] overflow-hidden bg-[#d4cfc8]">
      <RhinoPane />
      <div className="w-[8px] shrink-0 bg-[linear-gradient(90deg,#5a8078_0px,#5a8078_2px,#8f9194_3px,#8f9194_5px,#666_6px,#666_8px)]" />
      <div className="flex w-[2405px] shrink-0 flex-col overflow-hidden">
        <Toolbar />
        <Canvas />
      </div>
    </div>
  );
}
